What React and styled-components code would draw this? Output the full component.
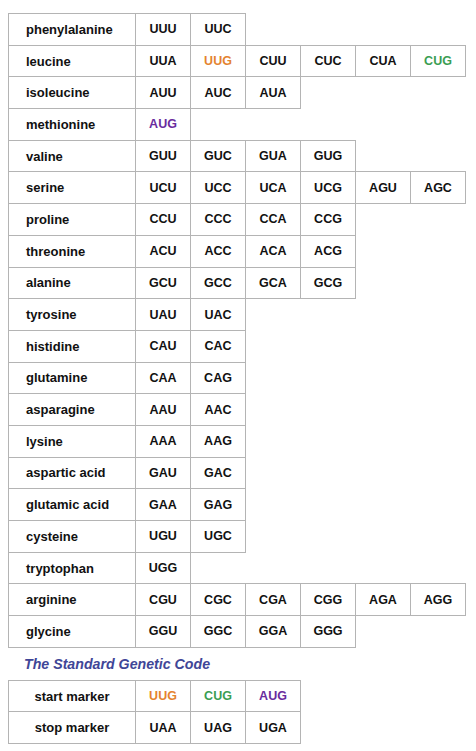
import React from 'react'
import styled, { createGlobalStyle } from 'styled-components'

const GlobalStyle = createGlobalStyle`
  body {
    margin: 0;
    background: #ffffff;
    font-family: "Liberation Sans", Arial, sans-serif;
  }
`

const aminoAcids = [
  ['phenylalanine', ['UUU', 'UUC']],
  ['leucine', ['UUA', 'UUG*o', 'CUU', 'CUC', 'CUA', 'CUG*g']],
  ['isoleucine', ['AUU', 'AUC', 'AUA']],
  ['methionine', ['AUG*p']],
  ['valine', ['GUU', 'GUC', 'GUA', 'GUG']],
  ['serine', ['UCU', 'UCC', 'UCA', 'UCG', 'AGU', 'AGC']],
  ['proline', ['CCU', 'CCC', 'CCA', 'CCG']],
  ['threonine', ['ACU', 'ACC', 'ACA', 'ACG']],
  ['alanine', ['GCU', 'GCC', 'GCA', 'GCG']],
  ['tyrosine', ['UAU', 'UAC']],
  ['histidine', ['CAU', 'CAC']],
  ['glutamine', ['CAA', 'CAG']],
  ['asparagine', ['AAU', 'AAC']],
  ['lysine', ['AAA', 'AAG']],
  ['aspartic acid', ['GAU', 'GAC']],
  ['glutamic acid', ['GAA', 'GAG']],
  ['cysteine', ['UGU', 'UGC']],
  ['tryptophan', ['UGG']],
  ['arginine', ['CGU', 'CGC', 'CGA', 'CGG', 'AGA', 'AGG']],
  ['glycine', ['GGU', 'GGC', 'GGA', 'GGG']],
]

const markers = [
  ['start marker', ['UUG*o', 'CUG*g', 'AUG*p']],
  ['stop marker', ['UAA', 'UAG', 'UGA']],
]

const tones = {
  o: '#e4832f',
  g: '#3b9e52',
  p: '#6a2c9e',
}

const Page = styled.div`
  padding: 13px 0 0 8px;
`

const Table = styled.table`
  border-collapse: collapse;
  table-layout: fixed;
`

const Row = styled.tr`
  height: 31.7px;
`

const NameCell = styled.td`
  width: 127px;
  box-sizing: border-box;
  border: 1px solid #b4b4b4;
  padding: 0;
  padding-left: ${p => (p.$center ? '0' : '17px')};
  text-align: ${p => (p.$center ? 'center' : 'left')};
  font-size: 13px;
  font-weight: bold;
  color: #111;
`

const CodonCell = styled.td`
  width: 55px;
  box-sizing: border-box;
  border: 1px solid #b4b4b4;
  padding: 0;
  text-align: center;
  font-size: 12.5px;
  font-weight: bold;
  color: ${p => p.$tone || '#111'};
`

const Caption = styled.div`
  height: 32px;
  display: flex;
  align-items: center;
  padding-left: 16px;
  font-size: 14.2px;
  font-weight: bold;
  font-style: italic;
  color: #3f4697;
`

const Codon = ({ code }) => {
  const [text, tone] = code.split('*')
  return <CodonCell $tone={tone ? tones[tone] : undefined}>{text}</CodonCell>
}

const CodeTable = ({ rows, center }) => (
  <Table>
    <colgroup>
      <col style={{ width: 127 }} />
      {[0, 1, 2, 3, 4, 5].map(i => <col key={i} style={{ width: 55 }} />)}
    </colgroup>
    <tbody>
      {rows.map(([name, codons]) => (
        <Row key={name}>
          <NameCell $center={center}>{name}</NameCell>
          {codons.map(c => <Codon key={c} code={c} />)}
        </Row>
      ))}
    </tbody>
  </Table>
)

export default function App() {
  return (
    <>
      <GlobalStyle />
      <Page>
        <CodeTable rows={aminoAcids} />
        <Caption>The Standard Genetic Code</Caption>
        <CodeTable rows={markers} center />
      </Page>
    </>
  )
}
